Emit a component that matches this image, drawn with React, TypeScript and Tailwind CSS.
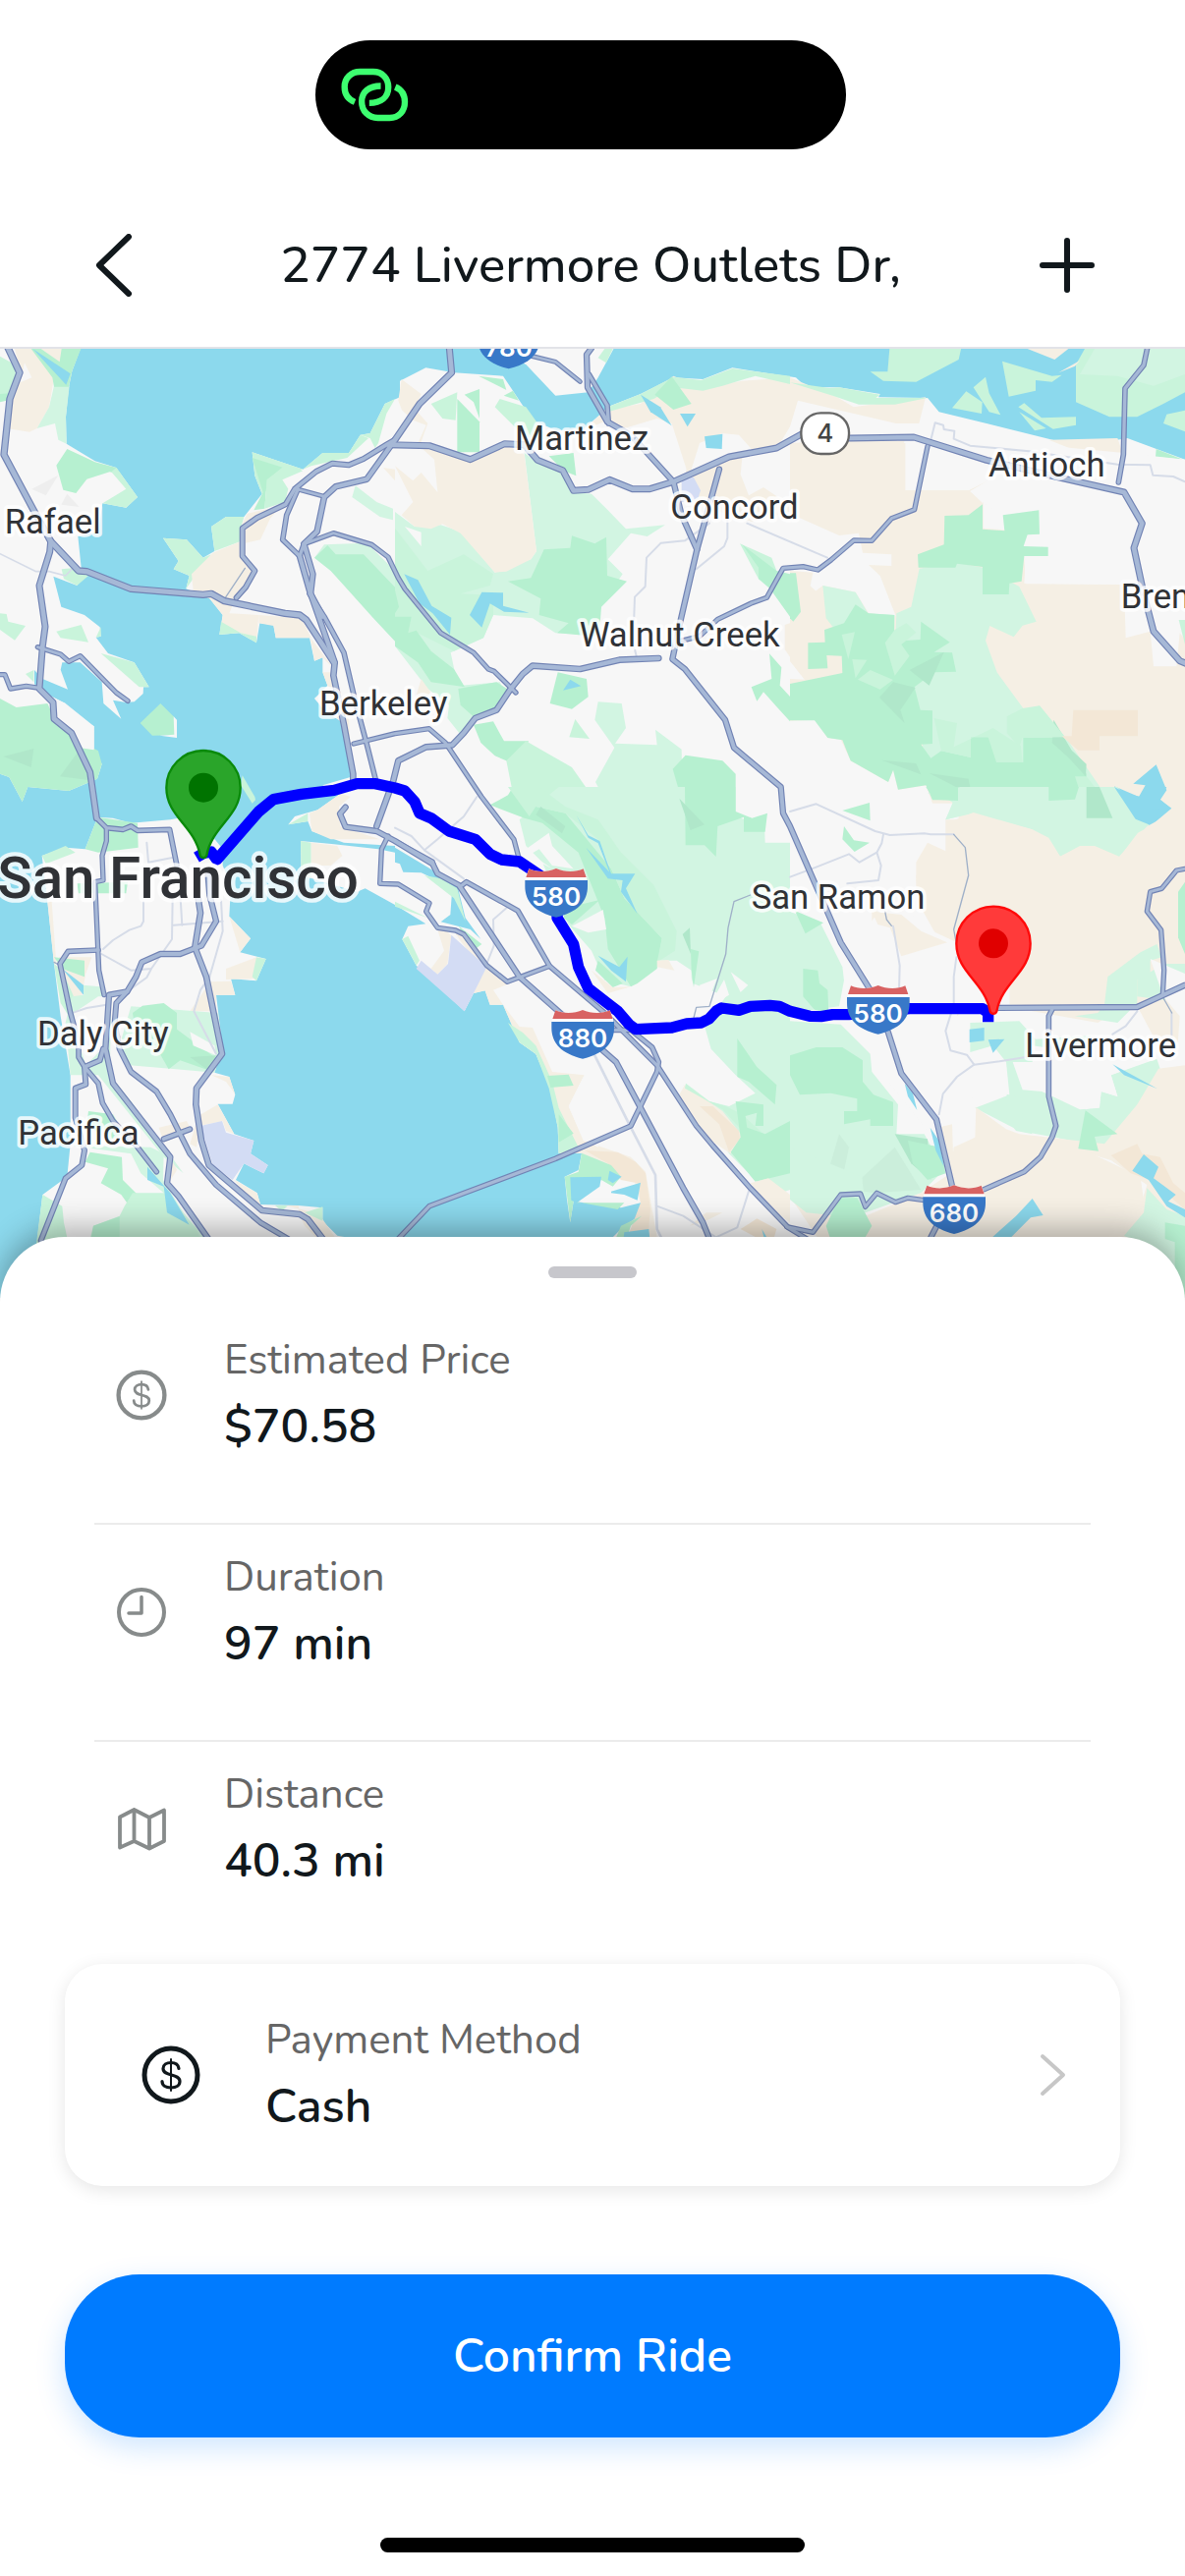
import React from "react";

/* Map drawing units: three units per CSS pixel at the phone's native width. */
const C = {
  water: "#8cd9ed",
  land: "#f7f7f7",
  beige: "#f5efe4",
  peach: "#f3e7d6",
  green: "#b6f0d0",
  mid: "#c9f4db",
  light: "#d2f5e2",
  dark: "#b0e7ca",
  purple: "#d3dcf4",
  road: "#a6b8d6",
  casing: "#7183b4",
  minor: "#d6dce8",
};

type Shape = [string, string];
type Tile = { x: number; y: number; shapes: Shape[] };

const tiles: Tile[] = [
  {
    x: 0,
    y: 0,
    shapes: [
      [C.land, "0,0 250,0 220,80 210,130 201,220 203,302 290,355 355,375 420,465 385,497 313,484 300,570 238,585 248,680 262,700 235,735 163,707 187,800 258,825 305,862 308,890 293,893 330,942 410,970 455,1045 438,1045 437,1065 410,1090 385,1092 345,1085 370,1142 316,1095 311,1030 245,970 190,970 185,992 207,1052 130,1020 105,993 105,1035 120,1055 200,1095 205,1120 287,1165 287,1237 311,1280 297,1325 210,1362 85,1350 68,1395 28,1320 0,1310"],
      [C.beige, "45,12 110,12 165,100 150,190 113,255 90,266 20,255 35,165 65,90"],
      [C.land, "75,55 97,100 62,115"],
      [C.light, "165,125 212,125 201,220 203,302 178,290 168,240 113,255 150,190"],
      [C.green, "95,12 247,12 220,80 210,128 165,128 160,100"],
      [C.water, "100,12 215,88 202,122"],
      [C.beige, "125,12 188,12 182,52"],
      [C.mid, "0,35 45,60 50,110 25,150 0,150"],
      [C.green, "0,150 28,148 20,170 0,175"],
      [C.green, "205,318 290,358 355,375 370,395 335,388 265,410 232,453 193,443 172,368"],
      [C.mid, "340,388 355,375 420,465 385,497 313,484 385,440"],
      ["#eeeeee", "97,440 178,398 140,460"],
      ["#eeeeee", "205,455 242,495 187,488"],
      [C.mid, "188,685 220,682 270,705 235,735 195,715"],
      [C.mid, "0,820 20,822 25,845 78,858 45,902 0,870"],
      [C.mid, "172,875 248,855 270,908 185,895"],
      [C.mid, "308,942 410,970 455,1045 425,1045"],
      [C.mid, "293,893 308,862 308,890"],
      [C.mid, "78,1005 103,993 103,1030"],
      [C.green, "0,1080 50,1107 145,1095 170,1150 215,1190 300,1240 311,1280 297,1325 210,1362 85,1350 68,1395 28,1320 0,1310"],
      [C.land, "120,1055 200,1095 287,1165 287,1237 240,1230 215,1180 165,1142 160,1095 118,1060"],
      [C.dark, "10,1257 103,1233 95,1290"],
      [C.dark, "238,1243 265,1300 275,1330 183,1318"],
      [C.green, "490,1095 530,1135 537,1192 465,1193 428,1155"],
      [C.land, "530,1135 540,1145 540,1200 488,1193 532,1190"],
    ],
  },
  {
    x: 0,
    y: 1350,
    shapes: [
      [C.land, "298,92 345,95 400,110 520,100 560,92 600,130 640,140 680,190 680,240 705,300 700,395 765,463 733,505 812,525 783,592 705,585 718,635 660,635 680,800 655,872 700,885 718,940 710,968 665,968 715,1060 775,1080 765,1120 818,1155 805,1180 745,1150 720,1200 785,1240 795,1275 910,1278 985,1285 985,1325 1030,1370 1200,1400 1200,1600 110,1600 115,1370 130,1245 205,1190 215,1090 215,880 185,700 165,540 145,350 128,210 200,185 260,190"],
      [C.green, "298,92 420,110 422,185 300,200 260,190"],
      [C.mid, "128,210 200,180 230,200 140,235"],
      [C.green, "235,295 390,290 385,325 240,325"],
      [C.beige, "145,350 165,540 172,540 158,350"],
      [C.beige, "700,395 765,463 733,505"],
      [C.beige, "690,555 783,520 783,585 690,588"],
      [C.mid, "783,520 812,525 783,592 770,580"],
      [C.beige, "640,595 705,593 718,635 660,635 660,685 580,685 612,640"],
      [C.beige, "180,520 280,520 262,570 258,590 250,640 220,640"],
      [C.green, "165,520 258,530 258,580 190,555"],
      [C.mid, "165,540 190,560 225,640 240,690 210,700 185,660"],
      [C.water, "190,555 255,605 255,635"],
      [C.light, "220,640 255,635 255,605 305,610 340,640 335,880 400,960 560,1180 500,1130 300,880 215,880 200,720"],
      [C.land, "300,640 328,640 312,800 262,850 240,780 225,690"],
      [C.light, "400,670 665,690 678,800 655,872 520,860 395,850 365,790"],
      [C.green, "405,690 435,668 500,660 540,690 540,740 655,825 640,866 550,835 515,862 480,800 420,790"],
      [C.dark, "580,825 660,820 635,865"],
      [C.land, "580,748 655,790 660,820 590,790"],
      [C.beige, "645,880 700,885 718,940 712,930 690,900"],
      [C.beige, "605,1005 665,970 715,1060 690,1050 680,1020 610,1035 600,1100 580,1090"],
      [C.purple, "612,1035 678,1020 690,1055 775,1080 765,1120 818,1155 805,1180 745,1150 710,1200 650,1155"],
      [C.beige, "485,1040 570,1020 585,1050 500,1085"],
      [C.beige, "515,1120 540,1170 515,1210"],
      [C.green, "270,990 345,1000 380,1060 330,1080 265,1030"],
      [C.light, "215,1095 460,1100 500,1120 498,1200 560,1300 625,1375 520,1375 500,1240 430,1180 400,1120"],
      [C.green, "275,1115 372,1130 375,1200 435,1260 400,1287 370,1245 308,1210 330,1165 260,1145"],
      [C.mid, "405,1240 500,1240 600,1350 620,1400 270,1400 285,1340 365,1310 380,1280"],
      [C.green, "285,1340 365,1312 365,1400 275,1400"],
      [C.mid, "130,1245 190,1280 195,1330 210,1400 110,1400"],
      [C.water, "450,1160 520,1240 578,1337 510,1300 500,1220 450,1200"],
      [C.beige, "715,1200 785,1240 795,1275 760,1265"],
      [C.mid, "840,1278 880,1278 860,1295"],
      [C.beige, "870,1278 912,1278 912,1300 930,1340 990,1400 1040,1400 985,1320 960,1300"],
      [C.mid, "930,1300 985,1282 985,1325"],
    ],
  },
  {
    x: 0,
    y: 0,
    shapes: [
      [C.land, "1221,160 1221,110 1300,70 1386,85 1536,95 1606,200 1636,235 1700,262 1781,258 1846,200 1866,185 1956,150 2056,100 2146,105 2236,70 2430,100 2462,130 2562,130 2687,150 2682,160 2832,162 2867,205 3012,240 3292,310 3442,285 3618,350 3618,2950 1856,2950 1856,2850 1871,2725 1906,2690 1959,2655 1956,2620 1896,2635 1751,2615 1741,2680 1731,2610 1724,2540 1766,2520 1776,2468 1706,2468 1703,2390 1681,2270 1636,2165 1586,2130 1536,2015 1496,2015 1481,1972 1446,1980 1418,2035 1281,1905 1271,1895 1228,1815 1246,1775 1300,1768 1206,1710 1115,1660 1090,1670 920,1620 918,1515 1020,1525 1155,1540 1206,1550 1206,1530 1050,1520 952,1485 940,1455 880,1465 900,1440 970,1420 1040,1370 985,1345 1070,1320 1075,1270 1060,1160 1025,1140 985,1110 960,1080 1000,1040 985,1000 985,955 960,965 945,895 842,895 835,855 793,850 783,910 730,880 670,885 680,825 640,775 568,745 578,705 530,685 545,660 498,590 570,595 620,650 655,630 645,555 690,525 745,525 800,455 778,400 770,328 925,380 985,330 1065,330 1100,275 1130,270 1175,180"],
      [C.land, "1386,0 1500,12 1606,60 1696,155 1796,145 1826,100 1880,0"],
      [C.water, "1206,1535 1306,1595 1396,1650 1421,1750 1468,1815 1436,1785 1346,1762 1375,1740 1380,1670 1366,1650 1286,1612 1231,1610 1221,1585 1206,1580"],
    ],
  },
  {
    x: 0,
    y: 0,
    shapes: [
      [C.mid, "770,328 925,380 865,408 800,455 778,400"],
      [C.green, "770,345 865,375 815,412 808,500 775,505 803,450"],
      [C.mid, "865,372 925,385 862,412 880,440 870,480 808,500 815,412"],
      [C.mid, "498,590 570,595 620,650 645,640 600,700 568,745 578,705 530,685 545,660"],
      [C.mid, "645,555 690,525 745,525 735,560 735,600 655,630"],
      [C.beige, "755,515 800,505 855,495 825,530 795,595 750,605 750,650 775,690 720,770 700,820 790,825 783,905 735,880 675,860 680,825 640,775 590,750 585,700 650,635 735,600 740,545"],
      [C.beige, "790,825 920,835 950,895 842,895 835,858 790,850"],
      [C.mid, "670,885 675,845 735,880 783,890 783,910 730,880"],
      [C.beige, "948,895 975,930 1020,990 985,955 960,965"],
      [C.beige, "985,1000 1010,1000 1020,1060 1000,1040"],
      [C.beige, "1020,1130 1065,1140 1070,1230 1050,1160"],
      [C.mid, "985,330 1065,330 1100,275 1125,285 1060,345 950,370 925,380"],
      [C.mid, "1100,275 1130,270 1175,180 1206,165 1180,210 1155,300 1145,315 1130,285"],
      [C.light, "1085,430 1150,480 1200,500 1200,535 1160,525 1075,465"],
      [C.light, "990,610 1120,605 1206,690 1206,900 1140,830 1010,690 960,650"],
      [C.green, "960,650 1000,612 1025,640 1110,640 1206,740 1206,905 1140,835 1010,690"],
      [C.beige, "1170,375 1206,380 1206,415"],
      [C.beige, "1040,1370 1070,1380 1035,1410 1038,1470 1100,1490 1160,1510 1010,1510 952,1485 945,1430 970,1420"],
      [C.mid, "940,1430 940,1455 880,1465"],
      [C.mid, "918,1515 950,1520 950,1625 920,1620"],
      [C.beige, "950,1520 1030,1530 1045,1560 1010,1590 950,1590"],
      [C.mid, "740,1315 778,1380 780,1390 770,1400 735,1345"],
    ],
  },
  {
    x: 1206,
    y: 0,
    shapes: [
      [C.light, "0,510 60,555 140,550 200,570 305,695 415,655 432,630 395,330 430,355 510,385 545,450 600,455 650,505 705,562 825,550 770,585 720,575 650,655 695,700 660,750 625,800 627,885 490,880 420,835 300,825 270,895 170,940 185,1010 200,1040 320,1030 340,1065 310,1115 245,1145 200,1190 160,1140 165,1100 100,1050 0,920"],
      [C.mid, "0,560 100,690 210,640 300,700 290,735 200,760 300,765 300,825 270,895 180,935 60,875 0,900"],
      [C.green, "455,625 535,620 540,583 610,607 645,587 648,705 708,722 630,800 627,840 610,890 495,880 530,850 440,825 445,775 345,722 415,712"],
      [C.beige, "20,105 80,150 60,195 100,240 75,310 120,350 130,450 80,390 55,415 0,370 55,480 20,520 60,555 110,562 145,547 200,575 305,695 340,692 415,655 432,630 395,335 335,302 230,350 105,308 15,300 40,250 10,170"],
      [C.land, "0,180 55,230 95,245 70,300 10,310"],
      [C.mid, "110,180 190,145 185,230 145,225"],
      [C.mid, "305,190 320,165 400,190 425,225 470,290 395,280"],
      [C.green, "190,165 258,235 258,328 190,328"],
      [C.green, "212,152 258,135 258,225 240,175"],
      [C.green, "255,95 330,105 340,138"],
      [C.green, "332,155 360,140 378,170"],
      [C.green, "470,340 545,330 553,400 515,385"],
      [C.land, "30,555 80,572 80,615"],
      [C.water, "28,700 70,718 112,797 172,833 168,885 115,820 75,790"],
      [C.water, "265,755 330,757 330,797 410,818 333,815 290,790 265,863 228,825"],
      [C.green, "0,750 12,800 0,820"],
      [C.green, "0,830 50,830 40,880 65,872 110,935 180,990 213,1045 110,1030 70,970 0,920"],
      [C.beige, "80,1020 108,1060 100,1080 65,1070"],
      [C.green, "193,1050 310,1030 350,1055 310,1115 245,1140 200,1100"],
      [C.green, "240,1160 300,1150 333,1210 408,1210 375,1285 305,1255 262,1215"],
      [C.mid, "340,1270 400,1210 540,1290 610,1390 650,1500 600,1500 360,1370"],
      [C.green, "497,1000 585,1020 590,1075 540,1112 473,1095"],
      [C.water, "535,1022 568,1042 513,1055"],
      [C.mid, "550,1143 594,1203 532,1198"],
      [C.light, "620,1090 692,1095 705,1170 672,1217 800,1222 795,1175 875,1235 880,1500 700,1500 612,1335 670,1230 610,1145"],
      [C.green, "887,1253 1000,1270 1040,1310 1040,1420 1000,1470 980,1500 887,1430 848,1295"],
      [C.green, "1143,943 1180,985 1175,1040 1230,1100 1206,1150 1165,1105 1125,1060 1105,1088 1088,1045 1150,1020"],
      [C.mid, "1053,607 1150,650 1165,690 1185,720 1150,740 1110,715"],
      [C.green, "1060,610 1165,690 1206,700 1206,830 1145,745 1110,715 1110,680"],
      [C.beige, "1190,855 1206,850 1290,1005 1260,1030 1190,930"],
      [C.beige, "580,258 640,200 750,180 850,95 940,130 1060,110 1206,100 1350,160 1400,190 1620,160 1600,240 1530,240 1230,170 1206,250 1170,310 1060,345 1055,395 1080,460 1125,435 1206,490 1206,510 1090,540 960,500 870,470 890,380 845,240 800,225 700,255 650,230"],
      [C.mid, "650,190 750,150 850,98 935,108 1030,72 1206,95 1206,120 1100,95 1000,125 940,140 850,130 790,165 650,205"],
      [C.green, "845,97 905,180 850,198 793,152"],
      [C.land, "930,300 1000,270 1050,275 1090,320 1060,345 990,350 900,395"],
      [C.water, "750,152 810,190 845,247 780,205"],
      [C.water, "870,210 918,210 893,250"],
      [C.water, "945,280 1000,272 998,318 950,315"],
      [C.purple, "875,395 912,405 933,445 925,470 875,480"],
      [C.mid, "620,40 640,12 665,12 645,55"],
    ],
  },
  {
    x: 2412,
    y: 0,
    shapes: [
      [C.mid, "305,0 525,0 515,45 385,113 285,110 245,82 298,82"],
      [C.mid, "648,50 800,95 830,92 800,113 750,108 750,140 668,158"],
      [C.mid, "597,98 608,148 643,214 608,205 560,130"],
      [C.mid, "538,142 587,175 585,210 495,193"],
      [C.mid, "697,190 715,178 768,223 873,220 873,245 803,257"],
      [C.mid, "700,205 782,255 747,262"],
      [C.mid, "900,12 1206,12 1206,145 1140,180 1060,220 975,220 873,175 873,60"],
      [C.light, "930,12 1206,12 1206,90 1110,125 1000,95 885,90"],
      [C.mid, "1150,212 1206,200 1206,265 1140,240"],
      [C.beige, "725,12 850,12 808,45"],
      [C.beige, "820,85 885,48 870,65"],
      [C.mid, "0,115 120,132 150,130 275,152 262,162 420,162 320,182 210,182 130,155"],
      [C.beige, "790,290 1000,285 1015,330 890,330"],
      [C.green, "1118,318 1200,350 1116,342"],
      [C.beige, "0,300 180,290 350,293 325,350 195,330 155,365 75,345 0,360"],
      [C.beige, "0,300 352,300 352,443 548,443 550,405 605,415 550,447 590,480 590,560 710,570 720,730 1020,732 1025,895 1100,875 1110,982 1180,982 1190,880 1206,900 1206,2130 0,2130 0,1020 45,1022 0,965 0,740 60,740 100,735 0,700 0,540 60,540 150,582 210,572 220,630 310,640 310,673 240,672 275,705 323,828 0,828 0,340"],
      [C.land, "0,515 150,582 210,575 222,635 310,640 310,675 240,672 275,705 323,828 240,820 200,755 100,735 55,770 70,695 0,690"],
      [C.beige, "20,765 60,735 100,770 110,840 165,860 105,910 60,1010 45,1022 0,965 0,850"],
      [C.land, "588,480 650,520 765,505 760,580 788,645 720,650 715,728 1020,732 1200,732 1206,350 1020,330 700,300 480,290 400,360 352,443 548,443 605,415 550,447 590,485"],
      [C.land, "0,1148 75,1145 115,1200 155,1205 185,1270 300,1335 315,1298 330,1358 415,1345 435,1400 515,1400 515,1450 475,1450 475,1550 385,1620 390,1700 445,1800 330,1860 500,1820 510,2050 670,1910 715,2030 940,2070 1050,2000 1130,2150 1206,2190 1206,2240 1000,2330 770,2300 560,2290 500,2450 490,2390 420,2400 300,2250 0,2250"],
      [C.light, "100,735 200,755 238,820 320,825 318,905 250,880 130,860 110,835"],
      [C.light, "325,820 370,800 395,683 510,665 590,680 700,738 752,845 710,857 683,892 610,858 597,903 632,1000 727,1130 762,1102 850,1210 950,1355 1000,1370 1070,1480 1005,1565 925,1530 825,1560 740,1480 560,1430 475,1450 500,1400 430,1350 380,1100 320,950"],
      [C.green, "472,522 545,520 588,487 588,563 655,568 650,520 760,505 762,578 725,580 713,615 788,617 788,645 715,645 707,722 670,728 668,762 588,762 588,678 510,668 505,680 392,680 390,640 470,610"],
      [C.green, "200,793 240,820 318,825 318,905 398,900 400,845 488,908 440,938 495,940 507,998 440,1000 380,1045 398,1115 435,1117 435,1218 400,1220 430,1262 462,1240 552,1260 552,1198 605,1198 630,1230 630,1275 712,1275 712,1200 830,1198 860,1240 905,1310 905,1390 880,1390 790,1390 788,1353 515,1353 515,1390 435,1390 415,1345 330,1358 315,1298 300,1335 185,1270 160,1207 115,1200 75,1147 0,1147 0,1035 160,1002 158,950 112,948 115,988 55,990 55,910 107,908 105,870 165,850"],
      [C.green, "0,697 18,697 33,815 10,845 0,835"],
      [C.mid, "158,885 198,877 178,960"],
      [C.mid, "190,960 235,962 200,1018"],
      [C.mid, "245,993 315,1023 275,1052 207,1022"],
      [C.mid, "355,850 385,878 340,915 365,950 320,1010 290,910 320,870"],
      [C.dark, "315,1030 383,1047 337,1115 350,1155 273,1077"],
      [C.dark, "470,938 425,1040 365,993"],
      [C.dark, "280,1268 385,1278 400,1312"],
      [C.dark, "425,1308 545,1325 555,1375"],
      [C.dark, "805,1145 860,1238 905,1280 903,1318 850,1260 800,1215"],
      [C.mid, "662,1135 710,1110 762,1102 840,1198 710,1200 700,1228 662,1185"],
      [C.mid, "440,1140 510,1155 500,1228 620,1170 705,1225 710,1275 630,1275 605,1198 552,1198 552,1260 462,1240"],
      [C.mid, "870,1318 905,1318 955,1380 890,1380"],
      [C.peach, "865,1115 1062,1115 1062,1195 945,1195 945,1238 880,1238 830,1195 860,1195"],
      [C.water, "1118,1282 1150,1360 1130,1390 1165,1415 1100,1470 1060,1450 990,1348 1065,1380 1085,1345 1048,1340"],
      [C.mid, "1187,840 1206,840 1206,915"],
    ],
  },
  {
    x: 1206,
    y: 1350,
    shapes: [
      [C.light, "380,100 500,0 605,0 648,78 590,0 1206,0 1206,1230 1150,1250 1020,1120 880,910 920,950 1020,975 1100,935 1040,880 965,800 945,730 960,690 905,600 905,560 860,530 800,530 760,555 720,610 640,590 600,500 530,420 450,230 400,180"],
      [C.land, "800,530 770,550 718,610 620,630 640,690 700,740 950,725 1010,640 910,600 895,555 835,560"],
      [C.land, "1040,0 1206,0 1206,170 1130,170 1128,120 1040,90"],
      [C.green, "885,0 1040,0 1040,75 1090,95 1137,80 1130,137 1065,137 1065,92 985,120 980,213 945,178 887,178"],
      [C.green, "290,55 345,25 360,0 430,60 520,80 660,250 700,340 815,462 800,555 740,600 720,610 650,495 640,400 560,200 450,110 395,95"],
      [C.mid, "345,0 440,0 520,60 620,100 690,200 790,300 860,440 855,500 800,535 815,462 700,340 620,160 520,80 430,60 410,90"],
      [C.dark, "445,60 520,120 510,142 430,85"],
      [C.dark, "868,35 945,115 902,132"],
      [C.dark, "900,430 903,510 878,450"],
      [C.land, "385,200 470,140 480,180 545,250 480,240 440,190 415,205 480,250"],
      [C.land, "540,425 635,375 645,435 590,445"],
      [C.green, "520,370 625,345 540,420 515,400"],
      [C.green, "620,530 695,600 665,612 612,560"],
      [C.beige, "600,560 665,612 720,610 650,630"],
      [C.beige, "800,530 835,528 853,560 800,550"],
      [C.water, "553,85 590,148 625,165 660,265 733,265 705,310 740,388 690,320 695,285 650,280 583,185 655,260 620,172 590,155"],
      [C.water, "620,515 685,550 710,518 705,595 660,560"],
      [C.land, "930,605 983,585 965,630 970,665 1020,635 1005,588 970,650 935,640"],
      [C.land, "1025,565 1078,605 1055,627"],
      [C.green, "903,495 928,502 912,612 905,560"],
      [C.green, "1045,768 1105,855 1165,910 1160,970 1080,900 1045,885"],
      [C.beige, "885,910 1000,990 1060,1065 1025,1120 965,1080 900,1000 868,940"],
      [C.peach, "930,975 970,975 1050,1050 1053,1075 1020,1115 990,1030"],
      [C.mid, "888,905 960,960 1010,975 1060,1000 1125,1060 1060,1050 1000,985 885,920"],
      [C.green, "1040,960 1125,970 1125,1035 1100,1035 1105,995 1070,1005 1075,1040 1130,1060 1206,1020 1206,1180 1100,1205 1025,1115 1055,1070"],
      [C.beige, "1085,1210 1140,1195 1206,1245 1206,1330 1150,1290"],
      [C.beige, "150,430 172,455 160,540 130,572 110,555 150,500 128,430"],
      [C.mid, "22,465 40,455 75,530 65,545"],
      [C.beige, "172,430 215,440 290,545 310,580 350,600 300,620 330,665 290,665 275,622 240,630 270,560 200,470"],
      [C.purple, "172,452 280,550 240,630 212,685 65,555 80,530 130,572 162,540"],
      [C.green, "195,425 265,480 245,495 215,470"],
      [C.mid, "0,350 130,415 100,400 0,365"],
      [C.mid, "90,270 140,280 190,310 215,410 180,340"],
      [C.beige, "330,665 380,732 420,735 480,870 578,880 530,975 575,1080 720,1130 765,1175 800,1375 750,1400 753,1280 730,1200 570,1118 500,1118 500,1000 475,920 430,815 380,780"],
      [C.land, "578,880 660,880 620,1100 575,1075 530,975"],
      [C.mid, "345,720 390,750 430,790 480,900 500,980 560,1100 500,1120 497,1040 470,920 430,815 380,780"],
      [C.green, "465,882 530,878 545,912 475,918"],
      [C.green, "500,1000 545,1058 500,1085"],
      [C.peach, "580,1110 680,1115 735,1145 765,1180 780,1290 770,1400 700,1400 750,1270 740,1210 690,1200 650,1150"],
      [C.green, "570,1118 660,1155 690,1190 665,1220 630,1200 555,1270 700,1270 680,1290 545,1265 535,1330 518,1190 560,1175"],
      [C.water, "535,1192 630,1190 625,1220 555,1270 538,1262"],
      [C.water, "655,1172 692,1190 665,1210 650,1200"],
      [C.water, "660,1235 750,1208 740,1262 700,1245 660,1240"],
      [C.green, "665,1400 690,1340 753,1310 720,1340 700,1400"],
      [C.water, "700,1360 775,1350 780,1400 695,1400"],
      [C.peach, "1055,1350 1105,1318 1165,1350 1150,1400"],
      [C.water, "1120,1350 1150,1400 1130,1390"],
      [C.beige, "900,1340 950,1300 1000,1300 940,1330"],
    ],
  },
  {
    x: 2412,
    y: 1350,
    shapes: [
      [C.light, "475,100 500,40 420,20 520,0 1000,0 1100,120 1025,160 1005,212 930,180 885,180 825,212 790,155 740,130 560,78"],
      [C.green, "415,0 513,0 513,42 440,38"],
      [C.green, "790,0 882,0 870,38 790,42"],
      [C.water, "990,0 1030,20 1070,30 1085,0 1150,0 1130,38 1163,65 1100,68 1103,118 1055,98"],
      [C.dark, "905,0 945,0 985,95 905,95"],
      [C.green, "160,72 243,48 245,103"],
      [C.green, "165,120 195,163 243,170 197,198 160,160"],
      [C.beige, "480,110 560,78 740,130 790,155 825,212 885,180 930,180 1005,212 1090,120 1206,60 1206,500 1120,480 1070,510 970,580 940,630 870,665 670,665 670,540 600,470 500,470 340,517 250,420 250,380 340,380 445,445 385,310 385,230 420,170 485,200"],
      [C.land, "270,380 330,360 385,400 445,445 500,470 670,470 670,665 0,665 0,420 160,540"],
      [C.beige, "250,380 340,390 400,440 480,475 340,517 305,430 268,420"],
      [C.light, "0,380 95,420 160,550 165,590 150,670 0,690"],
      [C.green, "15,378 102,415 47,448"],
      [C.green, "40,555 85,560 90,600 115,620 118,690 75,680 40,640"],
      [C.light, "0,715 155,725 245,815 250,870 330,970 325,1060 410,1060 470,1170 400,1240 230,1300 0,1250"],
      [C.green, "0,820 80,795 160,795 222,835 222,900 255,940 315,962 315,1035 245,1035 245,1015 165,1030 165,990 205,990 205,952 125,935 30,940 0,880"],
      [C.dark, "320,1060 420,1075 430,1200 370,1150"],
      [C.green, "360,1080 460,1100 475,1180 420,1200 375,1150"],
      ["#cbeedb", "150,1060 180,1100 150,1245 100,1245 115,1180"],
      ["#cbeedb", "320,1100 400,1230 260,1240 180,1230"],
      [C.light, "550,720 700,715 750,770 920,760 880,810 740,790 740,850 770,930 905,985 945,970 950,930 1000,945 980,880 1120,830 1130,860 1050,990 1000,1080 960,1100 810,1070 700,1050 565,980 670,940 660,840 620,790 550,810"],
      [C.land, "680,840 780,840 880,810 1110,830 980,880 1000,945 950,930 945,980 885,985 770,930 710,925"],
      [C.light, "662,938 705,950 710,1010 740,1060 690,1050 660,1010"],
      [C.beige, "568,978 660,1045 700,1060 960,1090 1060,970 1125,860 1206,850 1206,1400 960,1400 1060,1310 1090,1215 980,1140 880,1110 470,1400 240,1400 230,1310 400,1240 490,1180 500,1100 565,1070"],
      [C.beige, "450,1040 495,1030 500,1180 480,1180"],
      [C.beige, "215,1330 640,1230 880,1100 1070,1190 1085,1300 1020,1400 100,1400 0,1250 100,1300"],
      [C.light, "0,1100 220,1190 230,1290 150,1310 50,1300 0,1260"],
      [C.green, "150,1255 205,1255 250,1340 215,1400 130,1400 110,1340"],
      [C.green, "902,988 1000,1060 930,1068 942,1112 880,1105"],
      [C.light, "1060,590 1140,540 1206,540 1206,640 1140,650 1060,640"],
      [C.light, "970,580 1070,505 1120,480 1135,520 1100,530 1100,580 1060,590 1060,660 1000,720 870,700 940,690 960,665"],
      [C.land, "1100,525 1206,570 1206,850 1180,840 1190,700 1140,640"],
      [C.green, "1185,320 1206,290 1206,510 1185,460"],
      [C.water, "548,740 593,735 593,775 548,780"],
      [C.water, "605,772 655,770 620,812"],
      [C.water, "985,847 1122,922 1020,880"],
      [C.water, "350,905 375,935 388,987 360,945"],
      [C.water, "428,1040 455,1080 470,1160 445,1110"],
      [C.peach, "980,1125 1060,1090 1075,1120 1130,1130 1170,1210 1206,1240 1206,1290 1100,1200 1040,1180"],
      [C.light, "1090,1225 1150,1290 1206,1310 1206,1600 1160,1600 1080,1400 1020,1370 1080,1300"],
      [C.water, "1080,1122 1125,1160 1110,1195 1178,1245 1155,1265 1206,1290 1206,1315 1150,1280 1095,1200 1045,1172"],
      [C.water, "740,1257 773,1308 735,1315 650,1400 590,1400 690,1310"],
      [C.green, "1145,1330 1206,1340 1206,1600 1175,1600 1175,1390 1145,1380"],
    ],
  },
];

type Line = [number, number, number, string];

const minorRoads: Line[] = [
  [0, 0, 5, "0,638 110,692 150,692 200,705 222,682"],
  [0, 1350, 6, "448,170 453,230 530,215 540,250"],
  [0, 1350, 6, "438,350 438,410 430,425 395,437 345,468 315,495"],
  [0, 1350, 6, "527,340 525,465 462,555 400,560 310,510"],
  [0, 1350, 6, "462,555 448,582 395,620"],
  [0, 1350, 6, "530,422 680,410"],
  [0, 1350, 6, "548,290 556,422"],
  [0, 1350, 6, "675,345 680,440 640,580 612,620 592,685 660,815"],
  [0, 1350, 6, "215,692 265,675 325,665"],
  [1206, 0, 6, "960,545 885,598 812,605 768,650 764,738 732,770 727,910 737,950"],
  [1206, 0, 6, "1015,530 1015,590 1005,615 920,685"],
  [1206, 0, 6, "1075,545 1320,650"],
  [2412, 0, 6, "430,290 443,238 468,245 470,258 502,263 500,287 550,308 730,325 1000,365 1100,367 1108,398 1170,402 1206,418"],
  [1206, 1350, 6, "0,125 50,150 90,193 210,280"],
  [1206, 1350, 6, "90,193 130,160 210,90 250,30"],
  [1206, 1350, 6, "340,370 300,405 302,485 280,540"],
  [1206, 1350, 8, "610,820 715,1030 795,1185 800,1350 815,1380"],
  [1206, 1350, 6, "800,1280 880,1310 980,1375 1045,1345 1083,1225"],
  [2412, 1350, 6, "0,75 80,52 260,135 305,147 410,142 430,145 500,145"],
  [2412, 1350, 6, "285,145 280,172 265,200 212,230 180,205 80,245 0,275"],
  [2412, 1350, 6, "265,200 278,240 270,285 175,295"],
  [2412, 1350, 6, "315,425 335,545 333,620"],
  [2412, 1350, 6, "508,520 500,580 500,665 475,745 490,805 540,818 562,848 640,838 720,825"],
  [2412, 1350, 6, "562,848 510,885 467,937 455,1000"],
  [2412, 1350, 6, "985,755 1025,730 1060,685"],
  [2412, 1350, 6, "1165,690 1165,770"],
];

const thinRoads: Line[] = [
  [0, 0, 4, "688,772 728,712 748,682"],
  [1206, 1350, 4, "1085,330 1035,350 1017,430 1010,510 960,670 920,673 912,705"],
  [2412, 1350, 4, "500,145 535,185 545,270 500,435 512,500"],
  [2412, 1350, 4, "290,380 295,405 310,424"],
  [2412, 1350, 4, "1140,645 1166,690"],
  [0, 1350, 4, "165,535 183,545"],
];

const roads: Line[] = [
  [0, 0, 20, "20,0 60,85 30,165 12,335 100,500 155,600 240,690 265,692 400,745 620,763 645,760 685,782 870,820 915,825 935,840 1020,970"],
  [0, 0, 19, "155,600 152,632 120,735 138,860 130,920 120,1050 162,1092 165,1142 218,1185 275,1305 295,1445"],
  [0, 0, 14, "115,923 185,945 210,967 245,950 355,1062 390,1087"],
  [0, 0, 14, "0,1007 15,1007 32,1050 80,1042 120,1048"],
  [0, 0, 16, "1206,290 1180,305 1110,348 1065,367 1015,362 965,387 900,440 872,487 785,528 740,560 740,645 778,690 750,740 722,772"],
  [0, 0, 18, "1206,290 1120,410 1025,433 990,465 968,570 928,608 955,700 948,760 985,830"],
  [0, 0, 13, "905,440 990,463"],
  [0, 0, 15, "910,440 875,520 863,595 915,645 928,608"],
  [0, 0, 18, "915,645 945,750 1022,970 1018,1010 1050,1160 1078,1310 1078,1345"],
  [0, 0, 15, "945,760 990,830 1050,940 1085,1090 1120,1220 1150,1340"],
  [0, 0, 14, "928,608 1018,575 1135,610 1185,648 1215,710 1236,745 1346,880 1446,940 1491,990 1509,997 1575,1062"],
  [0, 0, 14, "1080,1218 1206,1187 1310,1172 1360,1215 1470,1380 1569,1510 1590,1590"],
  [1206, 0, 19, "165,0 173,85 75,180 0,290"],
  [1206, 0, 19, "-20,305 105,308 230,350 335,302 395,305 435,352 512,383 545,445 590,442 655,412 725,440 778,440 850,418 1020,342 1165,315 1246,270 1390,285 1584,282 1806,352 2006,400 2226,450 2281,545 2256,620 2286,760 2316,875 2396,965 2420,975"],
  [1206, 0, 17, "600,10 585,30 588,130 648,235 720,275 850,418 875,520 922,625"],
  [1206, 0, 15, "592,90 648,185 652,240"],
  [1206, 0, 17, "990,380 922,625 870,850 847,960 885,990 1008,1145 1035,1230 1178,1350 1185,1430 1206,1470 1361,1825 1451,1970 1506,2100 1546,2225 1653,2365 1706,2590 1636,2725"],
  [1206, 0, 13, "400,30 490,52 565,112"],
  [1206, 0, 18, "805,957 685,962 565,990 420,980 390,1005 350,1055 310,1115 245,1140 210,1185 175,1222 95,1228 10,1270 -5,1330 -56,1470"],
  [1206, 0, 14, "870,905 930,890 985,838 1090,788 1135,772 1185,682 1246,677 1291,687 1331,657 1401,597 1456,598 1516,530 1586,503 1626,310"],
  [2412, 0, 15, "1093,0 1080,62 1023,133 1018,335 1003,420"],
  [0, 1350, 15, "295,95 325,125 375,130 400,120 420,133 518,130 540,240"],
  [0, 1350, 14, "325,125 325,165 312,210 315,285 290,290 302,560 318,635"],
  [0, 1350, 15, "300,498 208,502 183,540 215,690 240,780 240,825 258,855 300,905 313,965 345,1020 420,1100 478,1175"],
  [0, 1350, 16, "315,800 305,835 258,855 262,908 230,920 230,1010 258,1110 250,1155 200,1195 125,1385"],
  [0, 1350, 17, "635,270 640,330 660,410 615,485 550,510 490,510 433,535 415,580 388,625 333,635 322,800 345,905 520,1130 510,1210 545,1250 640,1385"],
  [0, 1350, 16, "388,625 355,660 350,720 365,800 400,870 478,930 520,1000 580,1120 660,1215 795,1330 880,1380"],
  [0, 1350, 18, "605,340 612,385 595,490 630,580 678,815 600,920 598,970 615,1080 638,1155 800,1293 915,1305 940,1320 990,1385"],
  [0, 1350, 16, "500,1075 580,1045"],
  [0, 1350, 17, "1055,62 1038,82 1055,122 1150,135 1206,165 1321,235 1336,265 1401,300 1586,580 1716,695 1881,840 1956,980 2086,1225 2146,1330 2170,1390"],
  [0, 1350, 14, "1185,150 1165,190 1160,295 1216,297 1311,355 1301,380 1336,430 1391,438 1416,450 1486,545 1549,595 1678,547"],
  [1206, 1350, 13, "0,165 115,228 122,250"],
  [1206, 1350, 15, "205,300 218,290 375,378 472,547 640,690 800,850 920,1035 970,1095 1085,1225 1200,1345 1290,1400"],
  [1206, 1350, 15, "660,742 720,742 785,795 805,840 800,870 720,1035 490,1135 105,1280 10,1380"],
  [2412, 1350, 17, "600,675 1060,672 1206,605"],
  [2412, 1350, 15, "800,680 790,700 790,945 812,1035 800,1070 765,1130 715,1175 590,1230"],
  [2412, 1350, 14, "1206,250 1180,255 1135,310 1100,320 1090,380 1133,437 1142,560 1138,635"],
  [2412, 1350, 14, "410,1262 360,1255 322,1268 265,1240 230,1282 215,1242 155,1245 70,1360 -10,1343"],
];

const route =
  "600,1565 622,1552 645,1548 662,1572 790,1425 835,1388 920,1372 1020,1360 1090,1340 1145,1340 1206,1353 1236,1362 1266,1395 1281,1430 1316,1445 1371,1485 1451,1510 1496,1555 1531,1572 1586,1578 1656,1625 1706,1670 1701,1750 1751,1830 1766,1900 1796,1965 1886,2035 1921,2075 1941,2090 2051,2085 2096,2073 2141,2070 2165,2058 2187,2034 2203,2025 2256,2032 2291,2020 2351,2017 2380,2020 2412,2035 2472,2050 2507,2051 2542,2045 2592,2045 2777,2027 3000,2027 3017,2040 3017,2068";

const labels: [string, number, number][] = [
  ["Rafael", 14, 575],
  ["Berkeley", 975, 1132],
  ["Martinez", 1572, 321],
  ["Concord", 2047, 530],
  ["Walnut Creek", 1769, 922],
  ["Antioch", 3018, 402],
  ["Bren", 3422, 803],
  ["San Ramon", 2294, 1723],
  ["Livermore", 3130, 2174],
  ["Daly City", 114, 2138],
  ["Pacifica", 55, 2441],
];

const shields: [string, number, number][] = [
  ["780", 1458, -77],
  ["580", 1603, 1598],
  ["880", 1684, 2030],
  ["580", 2586, 1955],
  ["680", 2818, 2565],
];

function Lines({ items, color, extra = 0 }: { items: Line[]; color: string; extra?: number }) {
  return (
    <g fill="none" stroke={color} strokeLinejoin="round" strokeLinecap="round">
      {items.map(([x, y, w, p], i) => (
        <polyline key={i} transform={`translate(${x} ${y})`} strokeWidth={w + extra} points={p} />
      ))}
    </g>
  );
}

function Shield({ n, x, y }: { n: string; x: number; y: number }) {
  return (
    <g transform={`translate(${x} ${y})`}>
      <path d="M2 28 12 2C38 14 70 12 95 1c25 11 57 13 83 1l10 26v12H2Z" fill="#fff" />
      <path d="M3 28 12 2C38 14 70 12 95 1c25 11 57 13 83 1l9 26Z" fill="#d86262" />
      <path d="M0 37h191v18c0 48-32 80-96 95C31 135 0 103 0 55Z" fill="#3878c8" />
      <text x="95" y="114" textAnchor="middle" className="fill-white font-['Inter',sans-serif] text-[78px] font-semibold">
        {n}
      </text>
    </g>
  );
}

function Pin({ x, y, fill, edge, core }: { x: number; y: number; fill: string; edge: string; core: string }) {
  return (
    <g transform={`translate(${x} ${y})`}>
      <path
        d="M-10-8C-26-98-113-126-113-215a113 113 0 0 1 226 0C113-126 26-98 10-8 6 2-6 2-10-8Z"
        fill={fill}
        stroke={edge}
        strokeWidth="7"
      />
      <circle cy="-215" r="45" fill={core} />
    </g>
  );
}

function RideMap() {
  return (
    <svg viewBox="0 12 3618 2898" className="block h-auto w-full" role="img" aria-label="Route from San Francisco to Livermore">
      <rect y="12" width="3618" height="2898" fill={C.water} />
      {tiles.map((t, i) => (
        <g key={i} transform={`translate(${t.x} ${t.y})`}>
          {t.shapes.map(([fill, points], j) => (
            <polygon key={j} fill={fill} points={points} />
          ))}
        </g>
      ))}
      <Lines items={minorRoads} color={C.minor} />
      <Lines items={thinRoads} color="#9fb0c8" />
      <Lines items={roads} color={C.casing} extra={2} />
      <Lines items={roads} color={C.road} extra={-5} />
      <g className="fill-[#303236] stroke-white/80 font-['Roboto',sans-serif] text-[104px]" strokeWidth="22" strokeLinejoin="round" paintOrder="stroke">
        {labels.map(([t, x, y]) => (
          <text key={t} x={x} y={y}>
            {t}
          </text>
        ))}
      </g>
      <polyline points={route} fill="none" stroke="#0000ff" strokeWidth="34" strokeLinejoin="round" />
      <text x="-8" y="1688" className="fill-[#303236] stroke-white/80 font-['Roboto',sans-serif] text-[175px] font-medium" strokeWidth="26" strokeLinejoin="round" paintOrder="stroke">
        San Francisco
      </text>
      <rect x="2446" y="208" width="146" height="125" rx="60" fill="#fff" stroke="#666" strokeWidth="7" />
      <text x="2519" y="298" textAnchor="middle" className="fill-[#444] font-['Inter',sans-serif] text-[78px] font-medium">
        4
      </text>
      {shields.map(([n, x, y]) => (
        <Shield key={`${n}-${x}`} n={n} x={x} y={y} />
      ))}
      <Pin x={621} y={1567} fill="#2aa52a" edge="#0a8a0a" core="#007300" />
      <Pin x={3033} y={2043} fill="#ff3a3a" edge="#ff0a0a" core="#e00000" />
    </svg>
  );
}

function DollarIcon({ className, stroke = 5 }: { className: string; stroke?: number }) {
  return (
    <svg viewBox="0 0 60 60" className={className} fill="none" stroke="currentColor" aria-hidden="true">
      <circle cx="30" cy="30" r="27" strokeWidth={stroke} />
      <path d="M30 14v32" strokeWidth="2" strokeLinecap="round" />
      <path d="M38 23.500C37.500 19.500 34.500 17.500 30 17.500S22 19.800 22 23.500c0 8.500 17 4.500 17 13 0 4-3.500 6.500-9 6.500s-9-2.500-9-6.500" strokeWidth="3.200" strokeLinecap="round" />
    </svg>
  );
}

function ClockIcon() {
  return (
    <svg viewBox="0 0 50 50" className="size-[50px]" fill="none" stroke="currentColor" strokeWidth="4" strokeLinecap="round" strokeLinejoin="round" aria-hidden="true">
      <circle cx="25" cy="25" r="23" />
      <path d="M25 9.500v16.500H12" strokeWidth="3.500" />
    </svg>
  );
}

function FoldedMapIcon() {
  return (
    <svg viewBox="0 0 50 50" className="size-[50px]" fill="none" stroke="currentColor" strokeWidth="3.800" strokeLinecap="round" strokeLinejoin="round" aria-hidden="true">
      <path d="M3 12.500 17.500 5 33 13l15-7.500V37L33 44.500 17.500 37 3 43.500ZM17.500 5v32M33 13v31.500" />
    </svg>
  );
}

const details = [
  { label: "Estimated Price", value: "$70.58", icon: <DollarIcon className="size-[52px]" /> },
  { label: "Duration", value: "97 min", icon: <ClockIcon /> },
  { label: "Distance", value: "40.3 mi", icon: <FoldedMapIcon /> },
];

export default function App() {
  return (
    <div className="flex min-h-screen flex-col bg-white font-['Nunito','Lato',sans-serif] text-[#11181c]">
      <div className="flex justify-center pt-[41px] pr-6">
        <div className="flex h-[111px] w-[540px] items-center rounded-full bg-black px-[26px]">
          <svg viewBox="50 58 206 164" className="h-[55px] w-[69px]" fill="none" stroke="#3dfe70" strokeWidth="19" aria-hidden="true">
            <path d="M92 162C72 154 61 138 61 116c0-27 20-46 47-46h40c27 0 46 19 46 47 0 30-22 48-58 48" />
            <path d="M171 113c-36 0-58 18-58 47 0 30 21 50 49 50h36c28 0 46-20 46-48 0-22-10-38-29-46" />
          </svg>
        </div>
      </div>

      <header className="flex h-[203px] items-center justify-between border-b-2 border-[#e2e3e8] pt-[34px] pr-[88px] pl-[84px]">
        <button type="button" aria-label="Back" className="flex size-16 items-center justify-center">
          <svg viewBox="0 0 64 64" className="size-16" fill="none" stroke="currentColor" strokeWidth="6" strokeLinecap="round" strokeLinejoin="round" aria-hidden="true">
            <path d="M47 3 17 32l30 29" />
          </svg>
        </button>
        <h1 className="text-[51px] leading-[66px] font-medium">2774 Livermore Outlets Dr,</h1>
        <button type="button" aria-label="Add stop" className="flex size-16 items-center justify-center">
          <svg viewBox="0 0 64 64" className="size-16" fill="none" stroke="currentColor" strokeWidth="6" strokeLinecap="round" aria-hidden="true">
            <path d="M32 7v50M7 32h50" />
          </svg>
        </button>
      </header>

      <RideMap />

      <main className="relative -mt-[62px] flex flex-1 flex-col rounded-t-[66px] bg-white px-[66px] pt-[30px] pb-6 shadow-[0_-9px_30px_rgba(0,0,0,0.3)]">
        <div className="h-3 w-[90px] self-center rounded-full bg-[#c7c7cc]" />

        <dl className="mt-[30px] px-[30px]">
          {details.map((d) => (
            <div key={d.label} className="flex h-[221px] items-start gap-[58px] border-b-2 border-[#ececec] pt-[24px] pl-[21px] last:border-b-0">
              <div className="flex h-[130px] w-[53px] items-center justify-center text-[#878b8b]">{d.icon}</div>
              <div className="flex flex-col">
                <dt className="text-[42px] leading-[60px] text-[#666]">{d.label}</dt>
                <dd className="mt-1 text-[48px] leading-[66px] font-semibold">{d.value}</dd>
              </div>
            </div>
          ))}
        </dl>

        <button
          type="button"
          className="mt-[5px] flex h-[226px] w-full items-center rounded-[38px] bg-white pr-[45px] pl-[78px] text-left shadow-[0_4px_18px_rgba(0,0,0,0.1)]"
        >
          <DollarIcon className="size-[60px]" />
          <span className="ml-[66px] flex flex-1 flex-col">
            <span className="text-[42px] leading-[60px] text-[#666]">Payment Method</span>
            <span className="mt-1 text-[48px] leading-[66px] font-semibold">Cash</span>
          </span>
          <svg viewBox="0 0 48 48" className="size-12 text-[#c7c7c7]" fill="none" stroke="currentColor" strokeWidth="4" strokeLinecap="round" strokeLinejoin="round" aria-hidden="true">
            <path d="M14 5l21 19-21 19" />
          </svg>
        </button>

        <button
          type="button"
          className="mt-[90px] h-[166px] w-full rounded-[76px] bg-[#007bff] text-[48px] leading-[66px] font-semibold text-white shadow-[0_10px_30px_rgba(0,123,255,0.2)]"
        >
          Confirm Ride
        </button>

        <div className="mt-auto h-[15px] w-[432px] self-center rounded-full bg-black" />
      </main>
    </div>
  );
}
